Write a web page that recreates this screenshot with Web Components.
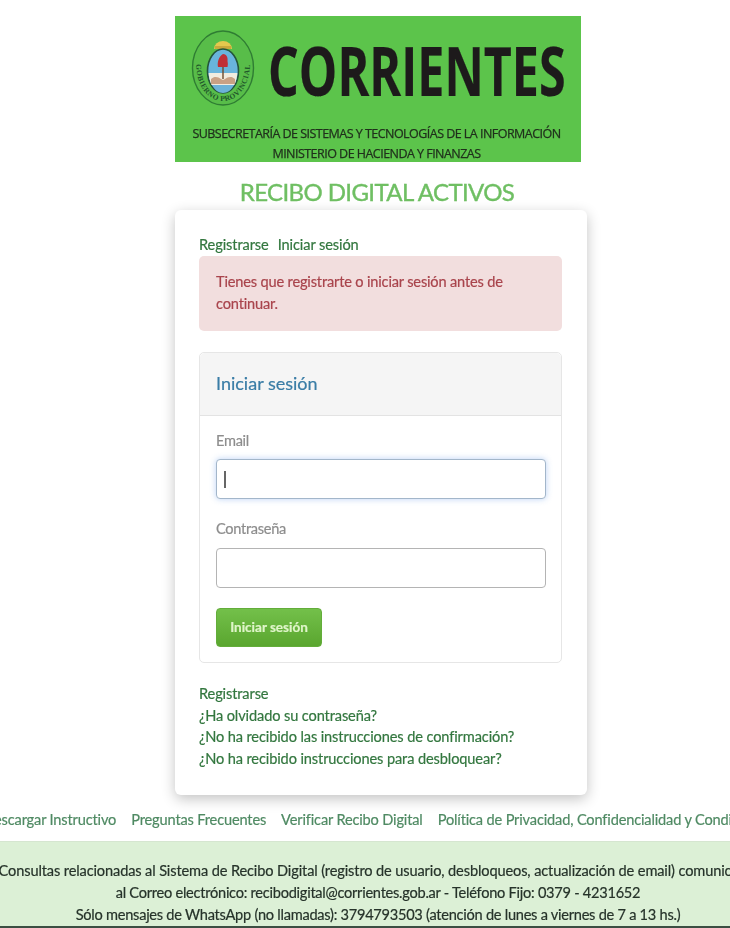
<!DOCTYPE html>
<html lang="es">
<head>
<meta charset="utf-8">
<title>Recibo Digital Activos</title>
<style>
  html, body { margin: 0; padding: 0; background: #fff; }
  body { width: 730px; height: 928px; overflow: hidden; font-family: Lato, "Open Sans", sans-serif; -webkit-text-stroke-width: .2px; }
</style>
</head>
<body>
<template id="brand-header-tpl">
  <style>
    :host { display: flex; flex-direction: column; align-items: center; padding-top: 16px; filter: blur(.4px); }
    .banner { box-sizing: border-box; width: 406px; height: 146px; margin-left: 26px; background: #5cc44b; display: flex; flex-direction: column; padding: 13px 0 0 16px; }
    .top { display: flex; align-items: center; gap: 13px; height: 78px; }
    .word { font: 700 68px/80px "Open Sans", sans-serif; color: #1d1a1b; width: 296px; white-space: nowrap; transform: translateY(2px) scaleX(.712); transform-origin: left center; }
    .sub { margin: 17px 0 0 -16px; text-align: center; font: 400 12.5px/20px "Open Sans", sans-serif; letter-spacing: -.53px; color: #20301c; -webkit-text-stroke: .25px #20301c; padding-right: 3px; }
    h1 { margin: 15px 0 0 24px; font: 400 24px/30px Lato, sans-serif; letter-spacing: -.6px; color: #6fbf63; height: 33px; -webkit-text-stroke: .4px #6fbf63; }
  </style>
  <div class="banner">
    <div class="top">
      <svg width="64" height="78" viewBox="0 0 64 78" aria-hidden="true">
        <ellipse cx="32" cy="39" rx="30.5" ry="37" fill="#58bd49" stroke="#2f7d33" stroke-width="1.4"/>
        <path d="M23 20a9 8 0 0 1 18 0z" fill="#e4c84e"/>
        <rect x="24" y="17" width="16" height="3" fill="#c9a93c"/>
        <ellipse cx="32" cy="42" rx="15.5" ry="22" fill="#69b4dc" stroke="#24553a" stroke-width="1.6"/>
        <path d="M17.6 44h28.8c-.4 4-1.200 8-3 12H20.500c-1.700-4-2.600-8-2.900-12z" fill="#f1ecdf"/>
        <path d="M21 56h22c-2.500 5-6.500 8-11 8s-8.500-3-11-8z" fill="#6cb2d8"/>
        <path d="M27 38c-1-5 1-11 5-13 4 0 5 4 4.500 7 .5 2 .5 4 0 6z" fill="#bf2f36"/>
        <path d="M31.300 38h1.400v12h-1.400z" fill="#6d4a2c"/>
        <path d="M20 50c3-3 7-2.500 10 0l2 1 2-1c3-2.500 7-3 10 0v5H20z" fill="#c9a184"/>
        <path id="arc" d="M5 33C5 60 19 72 32 72S59 60 59 33" fill="none"/>
        <text font-family="Liberation Serif, serif" font-size="7.500" font-weight="700" fill="#20562a" letter-spacing=".5"><textPath href="#arc" startOffset="50%" text-anchor="middle">GOBIERNO PROVINCIAL</textPath></text>
      </svg>
      <span class="word">CORRIENTES</span>
    </div>
    <div class="sub">SUBSECRETARÍA DE SISTEMAS Y TECNOLOGÍAS DE LA INFORMACIÓN<br>MINISTERIO DE HACIENDA Y FINANZAS</div>
  </div>
  <h1><slot></slot></h1>
</template>

<template id="link-list-tpl">
  <style>
    :host { display: flex; flex-direction: column; margin-top: 20px; font-size: 14.6px; line-height: 21.6px; letter-spacing: -.12px; color: #33773f; }
  </style>
  <slot></slot>
</template>

<template id="alert-box-tpl">
  <style>
    :host { display: block; box-sizing: border-box; height: 75px; padding: 15px 16px 15px 17px; background: #f2dede; border-radius: 5px; color: #a9444c; font-size: 14.6px; letter-spacing: -.17px; line-height: 22px; }
  </style>
  <slot></slot>
</template>

<template id="form-field-tpl">
  <style>
    :host { display: block; margin-bottom: 20px; }
    label { display: block; color: #8d8d8d; font-size: 14.6px; letter-spacing: -.3px; line-height: 20px; margin-bottom: 9px; }
    :host([focused]) label { margin-bottom: 8px; }
    .input { box-sizing: border-box; height: 40px; width: 330px; background: #fff; border: 1.5px solid #b4b4b4; border-radius: 4px; display: flex; align-items: center; padding-left: 7px; }
    :host([focused]) .input { border-color: #a3b6ca; box-shadow: 0 0 6px rgba(102, 155, 233, .45); }
    .caret { display: none; width: 1.500px; height: 17px; background: #666; }
    :host([focused]) .caret { display: block; }
  </style>
  <label><slot></slot></label>
  <div class="input"><span class="caret"></span></div>
</template>

<template id="login-panel-tpl">
  <style>
    :host { display: block; box-sizing: border-box; height: 311px; margin-top: 21px; background: #fff; border: 1px solid #e6e6e6; border-radius: 5px; }
    header { box-sizing: border-box; height: 63px; background: #f5f5f5; border-bottom: 1px solid #e3e3e3; border-radius: 5px 5px 0 0; padding: 0 16px 2px; display: flex; align-items: center; color: #3a7da6; font-size: 18px; }
    .body { padding: 15px 15px 0 16px; }
    button { display: block; box-sizing: border-box; width: 106px; height: 39px; padding: 0 0 2px; border: 1px solid #63ad3a; border-radius: 4px; background: linear-gradient(#73c04a, #5aa62f); color: #dff5c9; font: 700 13.5px Lato, sans-serif; }
  </style>
  <header><slot name="title"></slot></header>
  <div class="body">
    <slot></slot>
    <button type="button">Iniciar sesión</button>
  </div>
</template>

<template id="login-card-tpl">
  <style>
    :host { display: block; box-sizing: border-box; width: 412px; height: 585px; margin: 0 auto 0 175px; padding: 24px 25px 0 24px; background: #fff; border-radius: 6px; box-shadow: 0 4px 14px rgba(0, 0, 0, .24); filter: blur(.4px); }
    .top { display: flex; gap: 9px; height: 22px; font-size: 14.6px; letter-spacing: -.1px; line-height: 22px; color: #33773f; }
  </style>
  <div class="top"><slot name="nav"></slot></div>
  <slot></slot>
</template>

<template id="site-footer-tpl">
  <style>
    :host { display: block; margin-top: 13px; filter: blur(.4px); }
    nav { display: flex; justify-content: center; gap: 15px; height: 22px; line-height: 23px; padding-left: 25px; font-size: 14.6px; letter-spacing: -.16px; color: #4f8a63; white-space: nowrap; margin-bottom: 11px; }
    .band { box-sizing: border-box; height: 87px; padding: 18px 0 0 26px; background: #dcf0d6; border-top: 1px solid #d5e6d0; border-bottom: 2px solid #3c4f42; color: #26332a; font-size: 14.6px; letter-spacing: -.26px; line-height: 21.8px; white-space: nowrap; display: flex; flex-direction: column; align-items: center; }
    ::slotted(:not([slot]):first-of-type) { letter-spacing: -.13px; }
  </style>
  <nav><slot name="nav"></slot></nav>
  <div class="band"><slot></slot></div>
</template>

<brand-header>RECIBO DIGITAL ACTIVOS</brand-header>
<login-card>
  <span slot="nav">Registrarse</span>
  <span slot="nav">Iniciar sesión</span>
  <alert-box>Tienes que registrarte o iniciar sesión antes de continuar.</alert-box>
  <login-panel>
    <span slot="title">Iniciar sesión</span>
    <form-field focused>Email</form-field>
    <form-field>Contraseña</form-field>
  </login-panel>
  <link-list>
    <span>Registrarse</span>
    <span>¿Ha olvidado su contraseña?</span>
    <span>¿No ha recibido las instrucciones de confirmación?</span>
    <span>¿No ha recibido instrucciones para desbloquear?</span>
  </link-list>
</login-card>
<site-footer>
  <span slot="nav">Descargar Instructivo</span>
  <span slot="nav">Preguntas Frecuentes</span>
  <span slot="nav">Verificar Recibo Digital</span>
  <span slot="nav">Política de Privacidad, Confidencialidad y Condiciones</span>
  <div>Consultas relacionadas al Sistema de Recibo Digital (registro de usuario, desbloqueos, actualización de email) comunicarse</div>
  <span>al Correo electrónico: recibodigital@corrientes.gob.ar - Teléfono Fijo: 0379 - 4231652</span>
  <span>Sólo mensajes de WhatsApp (no llamadas): 3794793503 (atención de lunes a viernes de 7 a 13 hs.)</span>
</site-footer>

<script>
  // every element just clones its own template into an open shadow root
  const names = ['brand-header', 'link-list', 'alert-box', 'form-field', 'login-panel', 'login-card', 'site-footer'];
  names.forEach((name) => {
    customElements.define(name, class extends HTMLElement {
      constructor() {
        super();
        const tpl = document.getElementById(name + '-tpl');
        this.attachShadow({ mode: 'open' }).appendChild(tpl.content.cloneNode(true));
      }
    });
  });
</script>
</body>
</html>
